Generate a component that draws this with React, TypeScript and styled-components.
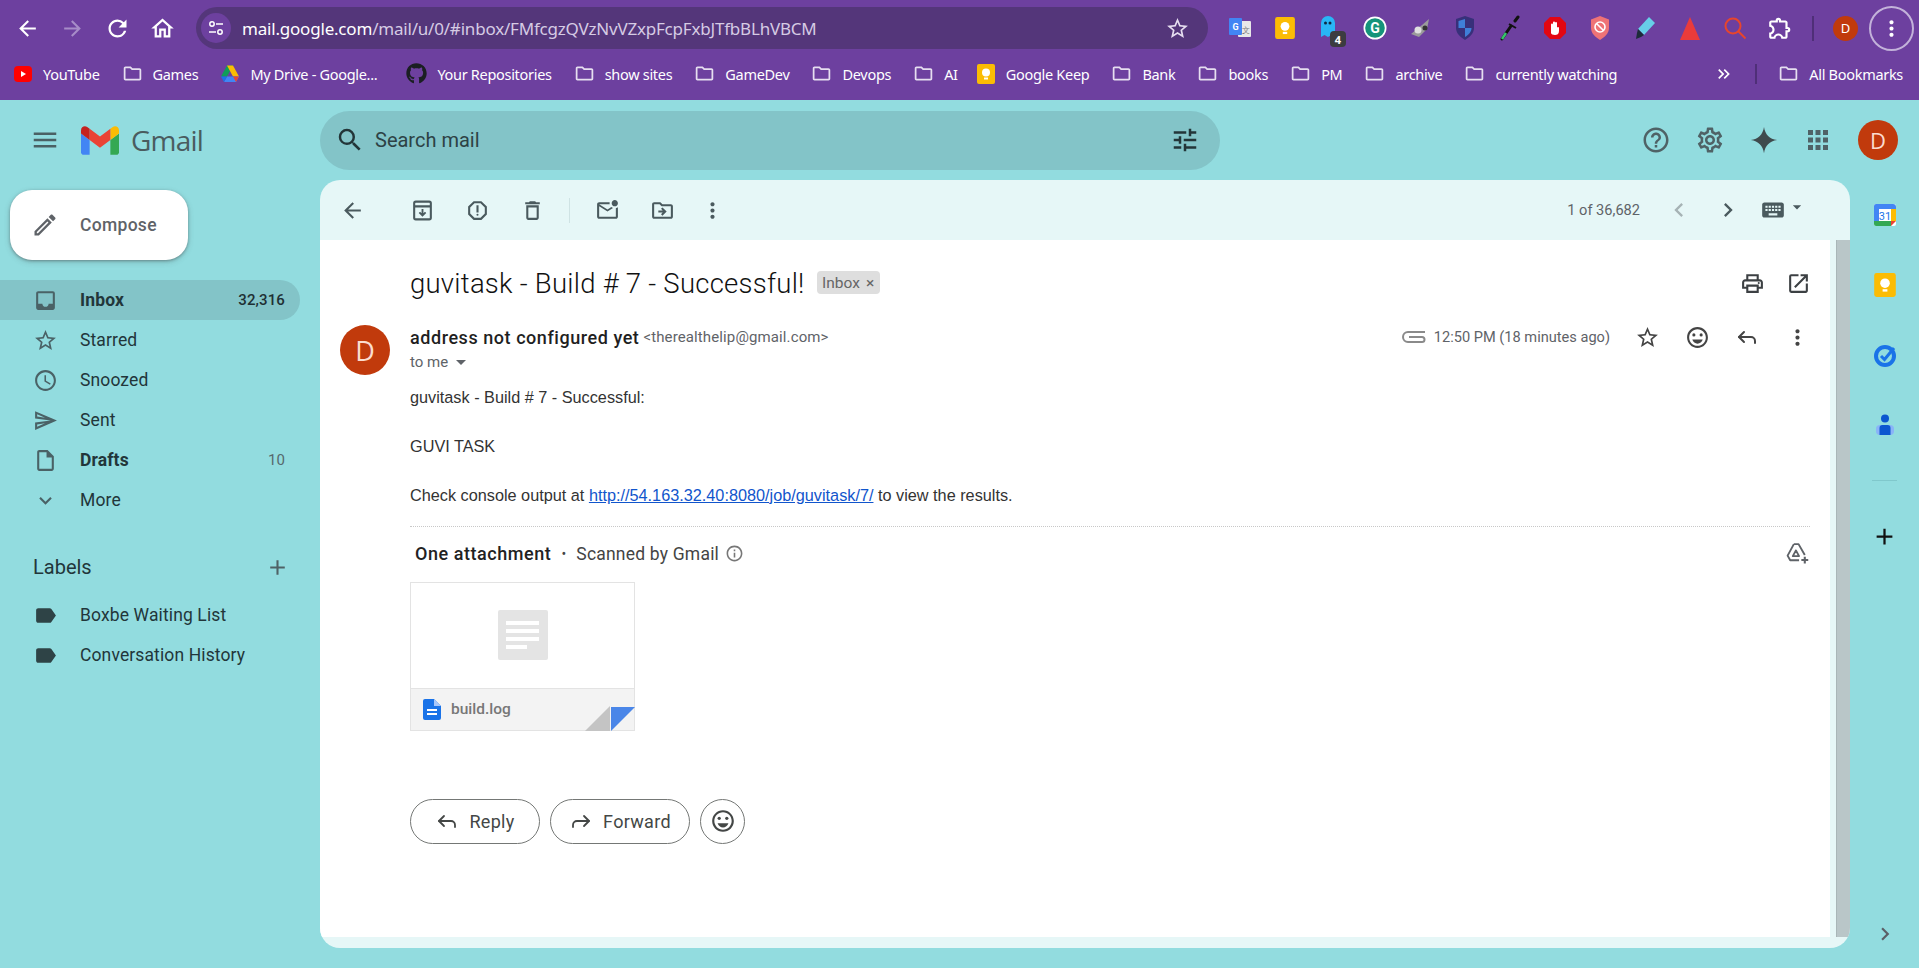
import React from "react";
import styled, { createGlobalStyle } from "styled-components";
import {
  MdArrowBack, MdOutlineReport, MdOutlineDelete, MdOutlineMarkEmailUnread, MdOutlineDriveFileMove,
  MdMoreVert, MdChevronLeft, MdChevronRight, MdKeyboard, MdArrowDropDown, MdOutlinePrint, MdOpenInNew,
  MdOutlineStarBorder, MdOutlineEmojiEmotions, MdInbox, MdOutlineSchedule, MdOutlineSend,
  MdOutlineInsertDriveFile, MdExpandMore, MdLabel, MdAdd, MdOutlineEdit, MdSearch, MdTune, MdHelpOutline,
  MdOutlineSettings, MdApps, MdMenu, MdOutlineInfo, MdOutlineHome, MdRefresh,
  MdStarBorder, MdOutlineExtension, MdArrowForward, MdKeyboardDoubleArrowRight, MdOutlineFolder,
} from "react-icons/md";
import { FaGithub } from "react-icons/fa";
import { Reply, Forward } from "lucide-react";

const GlobalStyle = createGlobalStyle`
  html, body { margin: 0; padding: 0; overflow: hidden; }
  body { font-family: Roboto, "Liberation Sans", sans-serif; background: #92dcdf; }
  * { box-sizing: border-box; }
`;

const UI_FONT = `"Noto Sans", "Open Sans", sans-serif`;

const Page = styled.div`
  width: 1919px;
  height: 968px;
  display: flex;
  flex-direction: column;
  overflow: hidden;
  background: #92dcdf;
`;

/* browser chrome */
const Chrome = styled.div`
  height: 100px;
  background: #6d409f;
  display: flex;
  flex-direction: column;
  color: #fff;
  font-family: ${UI_FONT};
`;

const NavBar = styled.div`
  height: 56px;
  display: flex;
  align-items: center;
  padding-left: 5px;
`;

const NavButton = styled.div<{ $dim?: boolean }>`
  width: 45px;
  height: 45px;
  display: flex;
  align-items: center;
  justify-content: center;
  color: ${(p) => (p.$dim ? "#a78cc8" : "#fff")};
`;

const Omnibox = styled.div`
  flex: none;
  width: 1012px;
  height: 42px;
  margin-left: 11px;
  border-radius: 21px;
  background: #54367a;
  display: flex;
  align-items: center;
  padding: 0 18px 0 5px;
`;

const SiteChip = styled.div`
  width: 30px;
  height: 30px;
  border-radius: 50%;
  background: #6d409f;
  display: flex;
  align-items: center;
  justify-content: center;
`;

const Url = styled.div`
  margin-left: 11px;
  font-size: 17px;
  letter-spacing: -0.2px;
  color: #d6cbe4;
  white-space: nowrap;
  b { font-weight: 400; color: #fff; }
`;

const OmniStar = styled.div`
  margin-left: auto;
  display: flex;
  color: #e6def0;
`;

const Extensions = styled.div`
  display: flex;
  align-items: center;
  margin-left: 9px;
`;

const ExtSlot = styled.div`
  position: relative;
  flex: none;
  width: 45px;
  height: 40px;
  display: flex;
  align-items: center;
  justify-content: center;
`;

const ExtBadge = styled.span`
  position: absolute;
  left: 23px;
  top: 23px;
  width: 16px;
  height: 16px;
  border-radius: 4px;
  background: #3c3c40;
  color: #fff;
  font-size: 11px;
  font-weight: 700;
  display: flex;
  align-items: center;
  justify-content: center;
`;

const ChromeDivider = styled.div<{ $h: number }>`
  flex: none;
  width: 2px;
  height: ${(p) => p.$h}px;
  background: #4f2f78;
`;

const ExtDivider = styled(ChromeDivider)`
  margin-left: 10px;
`;

const ProfileChip = styled.div`
  flex: none;
  width: 25px;
  height: 25px;
  margin-left: 19px;
  border-radius: 50%;
  background: #c13a0c;
  font-size: 13px;
  display: flex;
  align-items: center;
  justify-content: center;
`;

const KebabRing = styled.div`
  flex: none;
  width: 45px;
  height: 45px;
  margin-left: 11px;
  border-radius: 50%;
  border: 2px solid #c3b2da;
  display: flex;
  align-items: center;
  justify-content: center;
`;

const BookmarkBar = styled.div`
  flex: 1;
  display: flex;
  align-items: center;
  padding: 0 0 9px 13px;
`;

const Bookmark = styled.div<{ $after?: number }>`
  display: flex;
  align-items: center;
  gap: 10px;
  margin-right: ${(p) => p.$after ?? 22}px;
  font-size: 14.5px;
  letter-spacing: -0.3px;
  white-space: nowrap;
  svg { flex: none; }
`;

const BookmarkEnd = styled.div`
  display: flex;
  align-items: center;
  margin-left: auto;
  padding-right: 16px;
  gap: 21px;
`;

/* gmail header */
const Header = styled.header`
  height: 80px;
  display: flex;
  align-items: center;
  color: #4a6164;
`;

const Brand = styled.div`
  width: 320px;
  display: flex;
  align-items: center;
  padding-left: 30px;
`;

const BrandLogo = styled.div`
  margin-left: 21px;
  display: flex;
`;

const BrandName = styled.span`
  margin-left: 12px;
  font-family: "Open Sans", Roboto, sans-serif;
  font-size: 28px;
  letter-spacing: -0.8px;
  color: #4a5c5f;
`;

const SearchBar = styled.div`
  width: 900px;
  height: 59px;
  border-radius: 30px;
  background: #83c4c8;
  display: flex;
  align-items: center;
  padding: 0 20px 0 15px;
  color: #233538;
`;

const SearchText = styled.span`
  margin-left: 10px;
  font-size: 20px;
  color: #2d4245;
`;

const SearchTune = styled.div`
  margin-left: auto;
  display: flex;
`;

const HeaderTools = styled.div`
  margin-left: auto;
  display: flex;
  align-items: center;
  padding-right: 21px;
`;

const HeaderSlot = styled.div`
  width: 54px;
  display: flex;
  justify-content: center;
  color: #4f6266;
`;

const HeaderAvatar = styled.div`
  margin-left: 13px;
`;

const Avatar = styled.div<{ $size: number; $font: number }>`
  flex: none;
  width: ${(p) => p.$size}px;
  height: ${(p) => p.$size}px;
  border-radius: 50%;
  background: #c13a0c;
  color: #fbdccf;
  font-family: "Open Sans", sans-serif;
  font-size: ${(p) => p.$font}px;
  display: flex;
  align-items: center;
  justify-content: center;
`;

/* columns */
const Workspace = styled.div`
  flex: 1;
  display: flex;
  min-height: 0;
`;

const Sidebar = styled.nav`
  width: 320px;
  padding-top: 10px;
  color: #22363a;
`;

const Compose = styled.div`
  width: 178px;
  height: 70px;
  margin: 0 0 20px 10px;
  border-radius: 22px;
  background: #fff;
  box-shadow: 0 1px 3px rgba(60, 64, 67, 0.45), 0 2px 6px rgba(60, 64, 67, 0.2);
  display: flex;
  align-items: center;
  padding-left: 21px;
  gap: 21px;
  font-size: 17.5px;
  font-weight: 500;
  letter-spacing: 0.3px;
  color: #5f6368;
`;

const NavRow = styled.div<{ $active?: boolean; $bold?: boolean }>`
  width: 300px;
  height: 40px;
  border-radius: 0 20px 20px 0;
  background: ${(p) => (p.$active ? "#83c4c8" : "transparent")};
  font-size: 17.5px;
  font-weight: ${(p) => (p.$bold ? 700 : 400)};
  letter-spacing: 0.12px;
  display: flex;
  align-items: center;
  padding: 0 15px 0 33px;
  gap: 22px;
  svg { flex: none; color: #4a6266; }
`;

const NavCount = styled.span<{ $muted?: boolean }>`
  margin-left: auto;
  font-size: 15px;
  font-weight: ${(p) => (p.$muted ? 400 : 500)};
  color: ${(p) => (p.$muted ? "#56696d" : "#1f3034")};
`;

const LabelIcon = styled(MdLabel)`
  && { color: #2e4346; }
`;

const LabelsHead = styled.div`
  width: 300px;
  height: 40px;
  margin: 27px 0 8px;
  padding: 0 10px 0 33px;
  display: flex;
  align-items: center;
  justify-content: space-between;
  font-size: 20px;
  svg { color: #4f6266; }
`;

const Card = styled.main`
  width: 1530px;
  height: 768px;
  border-radius: 20px;
  background: #e6f7f7;
  overflow: hidden;
  display: flex;
  flex-direction: column;
`;

const Toolbar = styled.div`
  height: 60px;
  flex: none;
  display: flex;
  align-items: center;
  padding-left: 5px;
  color: #4a5a5e;
`;

const ToolSlot = styled.div<{ $w?: number; $left?: number; $color?: string; $raise?: number }>`
  width: ${(p) => p.$w ?? 55}px;
  margin-left: ${(p) => p.$left ?? 0}px;
  padding-bottom: ${(p) => p.$raise ?? 0}px;
  display: flex;
  align-items: center;
  justify-content: center;
  color: ${(p) => p.$color ?? "inherit"};
`;

const ToolDivider = styled.div`
  width: 1px;
  height: 25px;
  margin: 0 10px 0 9px;
  background: #cfe3e4;
`;

const Pager = styled.span`
  margin-left: auto;
  font-size: 14.6px;
  color: #5f6368;
  margin-right: 14px;
`;

const Sheet = styled.div`
  height: 697px;
  flex: none;
  display: flex;
`;

const Content = styled.div`
  width: 1510px;
  background: #fff;
  margin-right: 6px;
  display: flex;
  flex-direction: column;
  color: #202124;
`;

const ScrollTrack = styled.div`
  width: 14px;
  background: #b9c6c8;
  border-left: 1px solid #a9b6b8;
`;

const SubjectRow = styled.div`
  height: 42px;
  margin-top: 22px;
  padding: 0 9px 0 90px;
  display: flex;
  align-items: center;
  color: #3c4043;
`;

const Subject = styled.h1`
  margin: 0;
  font-size: 27.5px;
  font-weight: 300;
  color: #111;
  letter-spacing: 0.25px;
`;

const Chip = styled.span`
  height: 23px;
  width: 63px;
  margin: -1px 0 0 12px;
  border-radius: 4px;
  background: #dedede;
  color: #666;
  font-size: 15.5px;
  display: flex;
  align-items: center;
  justify-content: center;
  gap: 6px;
`;

const SubjectTools = styled.div`
  margin-left: auto;
  display: flex;
`;

const Message = styled.div`
  margin-top: 21px;
  padding: 0 0 0 20px;
  display: flex;
  gap: 20px;
`;

const MessageBody = styled.div`
  flex: 1;
  min-width: 0;
  padding-right: 8px;
`;

const MetaRow = styled.div`
  height: 24px;
  display: flex;
  align-items: center;
`;

const Sender = styled.span`
  font-size: 18px;
  font-weight: 500;
  letter-spacing: 0.55px;
  color: #1f1f1f;
`;

const SenderMail = styled.span`
  margin-left: 4px;
  font-size: 15px;
  letter-spacing: 0.12px;
  color: #5f6368;
`;

const MetaRight = styled.div`
  margin-left: auto;
  display: flex;
  align-items: center;
  color: #444;
`;

const Clip = styled.svg`
  margin-right: 8px;
`;

const Time = styled.span`
  font-size: 14.6px;
  color: #5f6368;
  margin-right: 12px;
`;

const ToMe = styled.div`
  height: 26px;
  display: flex;
  align-items: center;
  font-size: 15px;
  color: #5f6368;
  svg { margin-left: 1px; }
`;

const MailText = styled.div`
  margin-top: 10px;
  font-family: "Liberation Sans", Arial, sans-serif;
  font-size: 16.25px;
  line-height: 24.5px;
  color: #333;
  a { color: #1155cc; }
`;

const Gap = styled.div`
  height: 24.5px;
`;

const Rule = styled.div`
  margin: 18px 12px 0 0;
  border-top: 1px dotted #c8c8c8;
`;

const AttachHead = styled.div`
  height: 28px;
  margin-top: 13px;
  padding-left: 5px;
  display: flex;
  align-items: center;
  font-size: 17.5px;
  letter-spacing: 0.2px;
  color: #444;
`;

const AttachTitle = styled.b`
  font-size: 18px;
  font-weight: 500;
  letter-spacing: 0.55px;
  color: #222;
`;

const Dot = styled.span`
  margin: 0 10px;
  font-size: 14px;
`;

const DriveAdd = styled.div`
  margin-left: auto;
  display: flex;
  color: #5f6368;
`;

const AttachCard = styled.div`
  position: relative;
  width: 225px;
  height: 149px;
  margin-top: 14px;
  border: 1px solid #e3e3e3;
  display: flex;
  flex-direction: column;
`;

const Preview = styled.div`
  flex: 1;
  display: flex;
  align-items: center;
  justify-content: center;
`;

const PreviewDoc = styled.div`
  width: 50px;
  height: 50px;
  border-radius: 2px;
  background: #e4e4e4;
  display: flex;
  flex-direction: column;
  justify-content: center;
  gap: 4px;
  padding-left: 8px;
`;

const PreviewLine = styled.i<{ $w: number }>`
  display: block;
  height: 4px;
  width: ${(p) => p.$w}px;
  background: #fff;
`;

const AttachFoot = styled.div`
  height: 42px;
  border-top: 1px solid #e3e3e3;
  background: #f3f3f3;
  display: flex;
  align-items: center;
  padding-left: 12px;
  gap: 10px;
  font-size: 15.5px;
  font-weight: 500;
  color: #777;
`;

const Fold = styled.svg`
  position: absolute;
  right: -1px;
  bottom: -1px;
`;

const ActionRow = styled.div`
  margin-top: 68px;
  display: flex;
  gap: 10px;
`;

const ActionButton = styled.div<{ $w: number }>`
  width: ${(p) => p.$w}px;
  height: 45px;
  border: 1px solid #747775;
  border-radius: 23px;
  display: flex;
  align-items: center;
  justify-content: center;
  gap: 10px;
  font-size: 18px;
  letter-spacing: 0.3px;
  color: #444746;
`;

const SidePanel = styled.aside`
  flex: 1;
  height: 768px;
  display: flex;
  flex-direction: column;
  align-items: center;
`;

const PanelSlot = styled.div`
  width: 100%;
  height: 70px;
  display: flex;
  align-items: center;
  justify-content: center;
`;

const PanelRule = styled.div`
  width: 25px;
  height: 1px;
  margin: 20px 0;
  background: #80c8cc;
`;

const PanelChevron = styled.div`
  margin-top: auto;
  height: 28px;
  display: flex;
  align-items: center;
  color: #5b5f66;
`;

const ArchiveIcon = () => (
  <svg width="25" height="25" viewBox="0 0 24 24" fill="none" stroke="currentColor" strokeWidth="2">
    <rect x="4" y="3.5" width="16" height="17" rx="1.5" />
    <path d="M4 8h16" />
    <path d="M12 10.5v6M9 13.8l3 3 3-3" strokeWidth="1.8" />
  </svg>
);

const SparkIcon = () => (
  <svg width="30" height="30" viewBox="0 0 24 24" fill="#3f4a4d">
    <path d="M12 1.5c.9 6 4.4 9.600 10.500 10.500-6.100.9-9.600 4.500-10.500 10.500C11.100 16.500 7.500 12.900 1.500 12 7.500 11.100 11.100 7.500 12 1.500z" />
  </svg>
);

const GmailLogo = () => (
  <svg width="38" height="29" viewBox="52 42 88 66">
    <path fill="#4285f4" d="M58 108h14V74L52 59v43c0 3.320 2.690 6 6 6" />
    <path fill="#34a853" d="M120 108h14c3.320 0 6-2.690 6-6V59l-20 15" />
    <path fill="#fbbc04" d="M120 48v26l20-15v-8c0-7.420-8.470-11.650-14.400-7.200" />
    <path fill="#ea4335" d="M72 74V48l24 18 24-18v26L96 92" />
    <path fill="#c5221f" d="M52 51v8l20 15V48l-5.600-4.200c-5.940-4.450-14.400-.22-14.400 7.200" />
  </svg>
);

const SiteTune = () => (
  <svg width="18" height="18" viewBox="0 0 18 18" fill="none" stroke="#fff" strokeWidth="1.5">
    <circle cx="5" cy="5" r="2.200" />
    <path d="M9 5h7M2 13h7" />
    <circle cx="13" cy="13" r="2.200" />
  </svg>
);

const YouTubeIcon = () => (
  <svg width="20" height="20" viewBox="0 0 20 20">
    <rect x="1" y="2" width="18" height="16" rx="4" fill="#f00" />
    <path d="M8 7l5 3-5 3z" fill="#fff" />
  </svg>
);

const DriveIcon = () => (
  <svg width="20" height="20" viewBox="0 0 20 20">
    <path d="M7 1.500h6l-6 11H1z" fill="#0f9d58" />
    <path d="M13 1.500l6 11h-6l-6-11z" fill="#fbbc04" />
    <path d="M4 18l3-5.500h12L16 18z" fill="#4285f4" />
    <path d="M1 12.500h6L4 18z" fill="#1a73e8" />
    <path d="M19 12.500h-6l3 5.500z" fill="#ea4335" />
  </svg>
);

const KeepIcon = ({ size = 20 }: { size?: number }) => (
  <svg width={size} height={size} viewBox="0 0 20 20">
    <rect x="1" y="0" width="18" height="20" rx="2" fill="#fbbc04" />
    <circle cx="10" cy="8.500" r="4" fill="#fff" />
    <rect x="8" y="13.500" width="4" height="2" fill="#fff" />
  </svg>
);

const CalendarIcon = () => (
  <svg width="24" height="24" viewBox="0 0 24 24">
    <rect x="1" y="1" width="22" height="22" rx="2" fill="#fff" />
    <path d="M1 6V3a2 2 0 0 1 2-2h17a3 3 0 0 1 3 3v2z" fill="#4285f4" />
    <path d="M1 6h5v12H1z" fill="#4285f4" />
    <path d="M18 6h5v12h-5z" fill="#fbbc04" />
    <path d="M1 18h17v5H3a2 2 0 0 1-2-2z" fill="#34a853" />
    <path d="M18 18h5l-5 5z" fill="#ea4335" />
    <text x="12" y="16.500" textAnchor="middle" fontSize="11" fontFamily="Roboto" fill="#1a73e8">31</text>
  </svg>
);

const TasksIcon = () => (
  <svg width="24" height="24" viewBox="0 0 24 24" fill="none">
    <circle cx="12" cy="13" r="9" stroke="#1a73e8" strokeWidth="4" />
    <path d="M8 13l3.500 3.500L21 5" stroke="#1a73e8" strokeWidth="3" />
  </svg>
);

const ContactsIcon = () => (
  <svg width="20" height="22" viewBox="0 0 20 22">
    <circle cx="10" cy="4.500" r="4" fill="#0b57d0" />
    <rect x="1" y="11" width="18" height="10" rx="4" fill="#8ab4f8" />
    <path d="M4.500 21v-7a3 3 0 0 1 3-3h5a3 3 0 0 1 3 3v7z" fill="#0b57d0" />
  </svg>
);

const DriveAddIcon = () => (
  <svg width="25" height="25" viewBox="0 0 24 24" fill="none" stroke="currentColor" strokeWidth="1.800" strokeLinejoin="round">
    <path d="M8.500 3h4.500l6 10.500" />
    <path d="M8.500 3L2.500 14l2.500 4.500h8.500" />
    <path d="M7.500 14.500h6L10.500 9z" />
    <path d="M19 15v6.500M15.700 18.200h6.600" strokeWidth="2" />
  </svg>
);

const TranslateExt = () => (
  <svg width="24" height="24" viewBox="0 0 24 24">
    <rect x="10" y="5" width="13" height="16" rx="1" fill="#e8e8e8" />
    <rect x="1" y="2" width="13" height="17" rx="1" fill="#4285f4" />
    <text x="7.500" y="14" textAnchor="middle" fontSize="9" fontWeight="700" fontFamily="Roboto" fill="#fff">G</text>
    <text x="18" y="17" textAnchor="middle" fontSize="8" fontFamily="Roboto" fill="#777">文</text>
  </svg>
);

const GhostExt = () => (
  <svg width="22" height="26" viewBox="0 0 22 26">
    <path d="M2 22V8a7 7 0 0 1 14 0v14l-3.500-2-3.500 2-3.500-2z" fill="#29b6f6" />
    <circle cx="6.500" cy="8" r="1.500" fill="#0d2a44" />
    <circle cx="11" cy="8" r="1.500" fill="#0d2a44" />
  </svg>
);

const GrammarlyExt = () => (
  <svg width="24" height="24" viewBox="0 0 24 24">
    <circle cx="12" cy="12" r="11.500" fill="#fff" />
    <circle cx="12" cy="12" r="9.800" fill="#15947a" />
    <text x="12" y="17" textAnchor="middle" fontSize="14" fontWeight="700" fontFamily="Roboto" fill="#fff">G</text>
  </svg>
);

const SpyExt = () => (
  <svg width="24" height="24" viewBox="0 0 24 24">
    <path d="M3 18l11-9 7-6-2 10-8 8z" fill="#9b9b9b" />
    <circle cx="10" cy="14" r="3.500" fill="#e0e0e0" />
    <circle cx="17" cy="12" r="2.500" fill="#333" />
  </svg>
);

const ShieldExt = () => (
  <svg width="22" height="26" viewBox="0 0 22 26">
    <path d="M11 1l9 3v9c0 5-4 9-9 12-5-3-9-7-9-12V4z" fill="#38307a" />
    <path d="M11 4v9H4.500V6zM11 13h6.500c0 4-3 7-6.500 9z" fill="#3f7fd8" />
  </svg>
);

const DropperExt = () => (
  <svg width="24" height="26" viewBox="0 0 24 26" fill="none">
    <path d="M20 2l-3 4M4 24l9-13" stroke="#111" strokeWidth="3" strokeLinecap="round" />
    <path d="M11 9l7 4" stroke="#111" strokeWidth="2" />
    <path d="M4 24l4-6" stroke="#35c46a" strokeWidth="2.500" />
  </svg>
);

const StopExt = () => (
  <svg width="24" height="24" viewBox="0 0 24 24">
    <path d="M7 1h10l6 6v10l-6 6H7l-6-6V7z" fill="#e30613" />
    <path d="M8 17V8.500a1 1 0 0 1 2 0V11V6.500a1 1 0 0 1 2 0V11V7a1 1 0 0 1 2 0v5a1 1 0 0 1 2 0v3c0 3-2 4-4 4s-4-1-4-2z" fill="#fff" />
  </svg>
);

const ShieldRedExt = () => (
  <svg width="24" height="26" viewBox="0 0 24 26">
    <path d="M12 1l9 3.500V13c0 5-4 9-9 12-5-3-9-7-9-12V4.500z" fill="#ef7376" />
    <circle cx="12" cy="12" r="5" fill="none" stroke="#fff" strokeWidth="1.600" />
    <path d="M8.500 8.500l7 7" stroke="#fff" strokeWidth="1.600" />
  </svg>
);

const MarkerExt = () => (
  <svg width="24" height="26" viewBox="0 0 24 26">
    <path d="M16 2l6 6-11 12-6-6z" fill="#67cfe8" />
    <path d="M5 14l6 6-3 2-5 2 1-6z" fill="#1d2b3a" />
  </svg>
);

const TriangleExt = () => (
  <svg width="24" height="26" viewBox="0 0 24 26">
    <path d="M12 2l10 23H2z" fill="#ea3b3b" />
  </svg>
);

const SearchExt = () => (
  <svg width="24" height="24" viewBox="0 0 24 24" fill="none" stroke="#e8452c" strokeWidth="2">
    <circle cx="10" cy="10" r="7.500" />
    <path d="M15.500 15.500l7 7" />
  </svg>
);

const folder = <MdOutlineFolder size={21} color="#e6def0" />;

const bookmarks: { icon: React.ReactNode; label: string; after?: number }[] = [
  { icon: <YouTubeIcon />, label: "YouTube" },
  { icon: folder, label: "Games" },
  { icon: <DriveIcon />, label: "My Drive - Google...", after: 29 },
  { icon: <FaGithub size={21} color="#1b1f23" />, label: "Your Repositories" },
  { icon: folder, label: "show sites" },
  { icon: folder, label: "GameDev" },
  { icon: folder, label: "Devops" },
  { icon: folder, label: "AI", after: 18 },
  { icon: <KeepIcon />, label: "Google Keep" },
  { icon: folder, label: "Bank" },
  { icon: folder, label: "books" },
  { icon: folder, label: "PM" },
  { icon: folder, label: "archive" },
  { icon: folder, label: "currently watching" },
];

const extensions = [
  <TranslateExt />, <KeepIcon size={22} />, <GhostExt />, <GrammarlyExt />, <SpyExt />, <ShieldExt />,
  <DropperExt />, <StopExt />, <ShieldRedExt />, <MarkerExt />, <TriangleExt />, <SearchExt />,
  <MdOutlineExtension size={26} color="#fff" />,
];

const App: React.FC = () => (
  <Page>
    <GlobalStyle />
    <Chrome>
      <NavBar>
        <NavButton><MdArrowBack size={25} /></NavButton>
        <NavButton $dim><MdArrowForward size={25} /></NavButton>
        <NavButton><MdRefresh size={27} /></NavButton>
        <NavButton><MdOutlineHome size={27} /></NavButton>
        <Omnibox>
          <SiteChip><SiteTune /></SiteChip>
          <Url><b>mail.google.com</b>/mail/u/0/#inbox/FMfcgzQVzNvVZxpFcpFxbJTfbBLhVBCM</Url>
          <OmniStar><MdStarBorder size={25} /></OmniStar>
        </Omnibox>
        <Extensions>
          {extensions.map((ext, i) => (
            <ExtSlot key={i}>
              {ext}
              {i === 2 && <ExtBadge>4</ExtBadge>}
            </ExtSlot>
          ))}
          <ExtDivider $h={25} />
          <ProfileChip>D</ProfileChip>
          <KebabRing><MdMoreVert size={25} /></KebabRing>
        </Extensions>
      </NavBar>
      <BookmarkBar>
        {bookmarks.map((b) => (
          <Bookmark key={b.label} $after={b.after}>{b.icon}{b.label}</Bookmark>
        ))}
        <BookmarkEnd>
          <MdKeyboardDoubleArrowRight size={20} />
          <ChromeDivider $h={20} />
          <Bookmark $after={0}>{folder}All Bookmarks</Bookmark>
        </BookmarkEnd>
      </BookmarkBar>
    </Chrome>

    <Header>
      <Brand>
        <MdMenu size={30} />
        <BrandLogo><GmailLogo /></BrandLogo>
        <BrandName>Gmail</BrandName>
      </Brand>
      <SearchBar>
        <MdSearch size={30} />
        <SearchText>Search mail</SearchText>
        <SearchTune><MdTune size={30} /></SearchTune>
      </SearchBar>
      <HeaderTools>
        <HeaderSlot><MdHelpOutline size={30} /></HeaderSlot>
        <HeaderSlot><MdOutlineSettings size={30} /></HeaderSlot>
        <HeaderSlot><SparkIcon /></HeaderSlot>
        <HeaderSlot><MdApps size={30} /></HeaderSlot>
        <HeaderAvatar><Avatar $size={40} $font={22}>D</Avatar></HeaderAvatar>
      </HeaderTools>
    </Header>

    <Workspace>
      <Sidebar>
        <Compose><MdOutlineEdit size={28} color="#5f6368" />Compose</Compose>
        <NavRow $active $bold><MdInbox size={25} />Inbox<NavCount>32,316</NavCount></NavRow>
        <NavRow><MdOutlineStarBorder size={25} />Starred</NavRow>
        <NavRow><MdOutlineSchedule size={25} />Snoozed</NavRow>
        <NavRow><MdOutlineSend size={25} />Sent</NavRow>
        <NavRow $bold><MdOutlineInsertDriveFile size={25} />Drafts<NavCount $muted>10</NavCount></NavRow>
        <NavRow><MdExpandMore size={25} />More</NavRow>
        <LabelsHead>Labels<MdAdd size={25} /></LabelsHead>
        <NavRow><LabelIcon size={25} />Boxbe Waiting List</NavRow>
        <NavRow><LabelIcon size={25} />Conversation History</NavRow>
      </Sidebar>

      <Card>
        <Toolbar>
          <ToolSlot><MdArrowBack size={25} /></ToolSlot>
          <ToolSlot $left={15}><ArchiveIcon /></ToolSlot>
          <ToolSlot><MdOutlineReport size={25} /></ToolSlot>
          <ToolSlot><MdOutlineDelete size={25} /></ToolSlot>
          <ToolDivider />
          <ToolSlot><MdOutlineMarkEmailUnread size={25} /></ToolSlot>
          <ToolSlot><MdOutlineDriveFileMove size={25} /></ToolSlot>
          <ToolSlot $w={45}><MdMoreVert size={25} /></ToolSlot>
          <Pager>1 of 36,682</Pager>
          <ToolSlot $w={49} $color="#a6b3b5"><MdChevronLeft size={28} /></ToolSlot>
          <ToolSlot $w={49}><MdChevronRight size={28} /></ToolSlot>
          <ToolSlot $w={28} $left={7}><MdKeyboard size={26} /></ToolSlot>
          <ToolSlot $w={20} $raise={6}><MdArrowDropDown size={26} /></ToolSlot>
          <ToolSlot $w={43} />
        </Toolbar>
        <Sheet>
          <Content>
            <SubjectRow>
              <Subject>guvitask - Build # 7 - Successful!</Subject>
              <Chip>Inbox<span>×</span></Chip>
              <SubjectTools>
                <ToolSlot $w={46}><MdOutlinePrint size={25} /></ToolSlot>
                <ToolSlot $w={46}><MdOpenInNew size={25} /></ToolSlot>
              </SubjectTools>
            </SubjectRow>
            <Message>
              <Avatar $size={50} $font={27}>D</Avatar>
              <MessageBody>
                <MetaRow>
                  <Sender>address not configured yet</Sender>
                  <SenderMail>&lt;therealthelip@gmail.com&gt;</SenderMail>
                  <MetaRight>
                    <Clip width="24" height="14" viewBox="0 0 24 14" fill="none" stroke="#8a8a8a" strokeWidth="2">
                      <path d="M23 2H6a4.500 4.500 0 0 0 0 10h14a2.500 2.500 0 0 0 0-5H7" />
                    </Clip>
                    <Time>12:50 PM (18 minutes ago)</Time>
                    <ToolSlot $w={50}><MdOutlineStarBorder size={25} /></ToolSlot>
                    <ToolSlot $w={50}><MdOutlineEmojiEmotions size={25} /></ToolSlot>
                    <ToolSlot $w={50}><Reply size={24} /></ToolSlot>
                    <ToolSlot $w={50}><MdMoreVert size={25} /></ToolSlot>
                  </MetaRight>
                </MetaRow>
                <ToMe>to me<MdArrowDropDown size={24} /></ToMe>
                <MailText>
                  guvitask - Build # 7 - Successful:
                  <Gap />
                  GUVI TASK
                  <Gap />
                  Check console output at <a href="#job">http://54.163.32.40:8080/job/guvitask/7/</a> to view the results.
                </MailText>
                <Rule />
                <AttachHead>
                  <AttachTitle>One attachment</AttachTitle>
                  <Dot>•</Dot>
                  Scanned by Gmail
                  <ToolSlot $w={30} $color="#777"><MdOutlineInfo size={19} /></ToolSlot>
                  <DriveAdd><ToolSlot $w={50}><DriveAddIcon /></ToolSlot></DriveAdd>
                </AttachHead>
                <AttachCard>
                  <Preview>
                    <PreviewDoc>
                      <PreviewLine $w={33} />
                      <PreviewLine $w={33} />
                      <PreviewLine $w={33} />
                      <PreviewLine $w={21} />
                    </PreviewDoc>
                  </Preview>
                  <AttachFoot>
                    <svg width="18" height="21" viewBox="0 0 18 21">
                      <path d="M2 0h9l7 7v12a2 2 0 0 1-2 2H2a2 2 0 0 1-2-2V2a2 2 0 0 1 2-2z" fill="#1a73e8" />
                      <path d="M11 0v7h7z" fill="#a8c7fa" />
                      <path d="M4 10h10v2H4zM4 14h10v2H4z" fill="#fff" />
                    </svg>
                    build.log
                  </AttachFoot>
                  <Fold width="50" height="25" viewBox="0 0 50 25">
                    <path d="M0 25L25 0v25z" fill="#c4c4c4" />
                    <path d="M26 25V1h24z" fill="#4a86e8" />
                  </Fold>
                </AttachCard>
                <ActionRow>
                  <ActionButton $w={130}><Reply size={24} strokeWidth={1.800} />Reply</ActionButton>
                  <ActionButton $w={140}><Forward size={24} strokeWidth={1.800} />Forward</ActionButton>
                  <ActionButton $w={45}><MdOutlineEmojiEmotions size={26} /></ActionButton>
                </ActionRow>
              </MessageBody>
            </Message>
          </Content>
          <ScrollTrack />
        </Sheet>
      </Card>

      <SidePanel>
        <PanelSlot><CalendarIcon /></PanelSlot>
        <PanelSlot><KeepIcon size={24} /></PanelSlot>
        <PanelSlot><TasksIcon /></PanelSlot>
        <PanelSlot><ContactsIcon /></PanelSlot>
        <PanelRule />
        <PanelSlot><MdAdd size={27} color="#111" /></PanelSlot>
        <PanelChevron><MdChevronRight size={26} /></PanelChevron>
      </SidePanel>
    </Workspace>
  </Page>
);

export default App;
